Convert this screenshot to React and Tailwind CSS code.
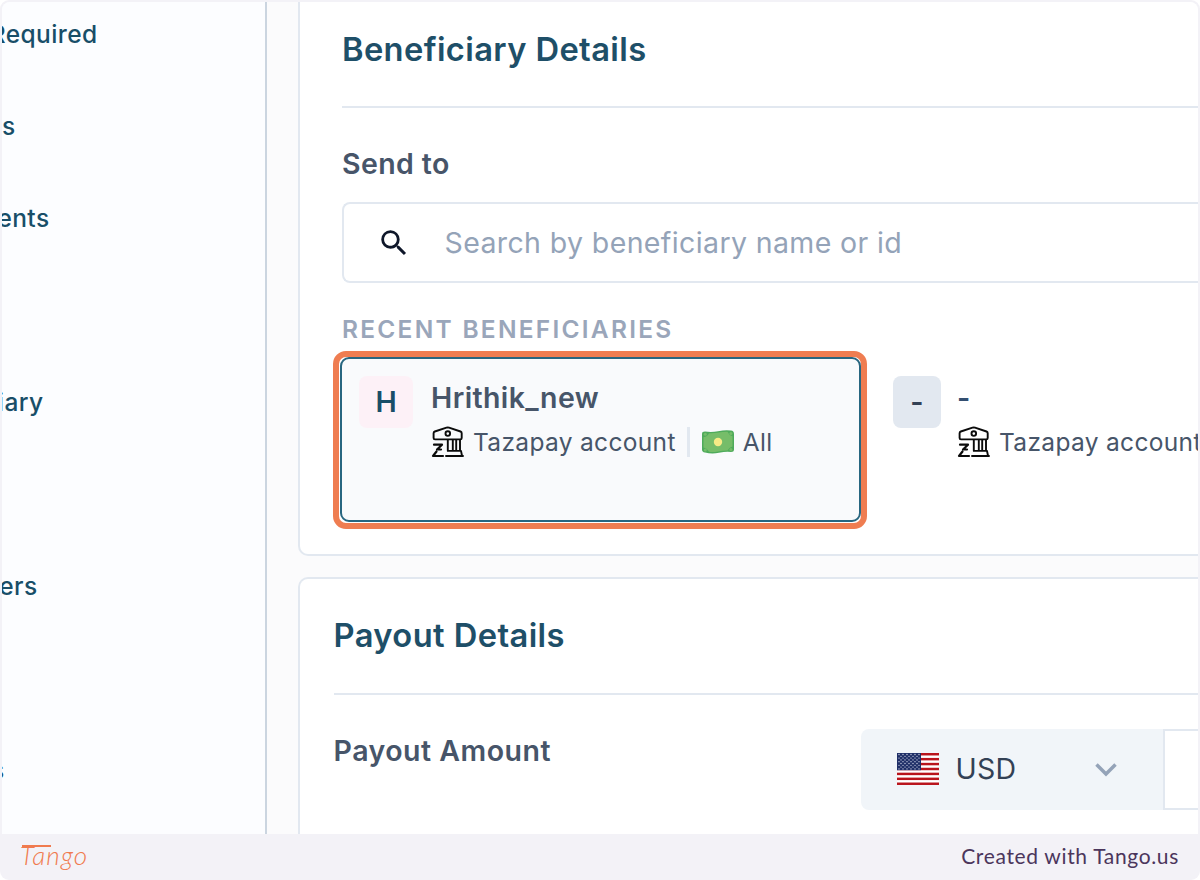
import React from "react";
import { MdSearch } from "react-icons/md";

const navItems = [
  { label: "Required", width: "w-[95.5px]" },
  { label: "s", width: "w-[13.5px]" },
  { label: "ents", width: "w-[47.5px]" },
  { label: "", width: "w-0" },
  { label: "iary", width: "w-[41.5px]" },
  { label: "", width: "w-0" },
  { label: "ers", width: "w-[35.5px]" },
  { label: "", width: "w-0" },
  { label: "s", width: "w-[2.5px]" },
];

function BankIcon() {
  return (
    <svg className="h-8 w-[34px] shrink-0" viewBox="0 0 34 32" fill="none" stroke="#0b0b0b" strokeWidth="1.9" strokeLinejoin="round" strokeLinecap="round">
      <path d="M2.6 7.2 Q2.6 6 3.8 5.5 L15.5 1.7 Q16.8 1.3 18 1.7 L29.5 5.5 Q30.7 6 30.7 7.2 V12 Q30.7 13.4 29.3 13.4 H4 Q2.6 13.4 2.6 12 Z" />
      <circle cx="16.8" cy="7.6" r="2.3" />
      <path d="M16.8 14 V24.6 M21.8 14 V24.6 M25.2 14 V24.6 M29 14 V24.6 M16.8 24.9 H30 L31 29.8 M15 30 H32" />
      <path d="M3 18.7 H11 L6 23.5 H10 M5.5 25.5 L2 30 H12" strokeWidth="2.2" />
    </svg>
  );
}

function CashIcon() {
  return (
    <svg className="h-[26px] w-[34px] shrink-0" viewBox="0 0 34 26">
      <path d="M1 5 Q1 2.6 4 2.6 Q11 3.6 17 2.2 Q25 .6 30 1.6 Q33 2 33 5 V20.5 Q33 23 30 23 Q25 22.3 18 23.8 Q11 25.2 4 23.6 Q1 23 1 20.5 Z" fill="#4fab5b" />
      <path d="M8 4.2 Q12 4.6 17.5 3.5 Q22.500 2.6 26.500 2.8 Q28 6.300 31.5 7.300 V17.500 Q28 18.5 26.500 21.5 Q22 21.400 17 22.5 Q12 23.4 8 22.8 Q6.500 19.500 2.500 18.500 V8.300 Q6.500 7.5 8 4.2 Z" fill="#76bd69" />
      <circle cx="17" cy="13" r="4.2" fill="#f7eb86" />
      <g fill="#76bd69"><circle cx="4.300" cy="5.300" r="1.5" /><circle cx="29.900" cy="4.5" r="1.5" /><circle cx="4.300" cy="21" r="1.5" /><circle cx="29.900" cy="20.5" r="1.5" /></g>
    </svg>
  );
}

function UsFlag() {
  return (
    <svg className="h-8 w-[42px] shrink-0" viewBox="0 0 42 32">
      <rect width="42" height="32" fill="#fff" />
      {[0, 1, 2, 3, 4, 5, 6].map((i) => (
        <rect key={i} y={i * 4.92} width="42" height="2.46" fill="#b9141c" />
      ))}
      <rect width="24" height="17.2" fill="#1f2f68" />
      {[0, 1, 2, 3, 4, 5, 6, 7, 8].map((r) =>
        [0, 1, 2, 3, 4, 5].map((c) =>
          r % 2 && c === 5 ? null : (
            <circle key={`${r}-${c}`} cx={2 + c * 4 + (r % 2) * 2} cy={1.5 + r * 1.8} r="0.65" fill="#d5d9e8" />
          )
        )
      )}
    </svg>
  );
}

function Account({ children }) {
  return (
    <div className="flex h-8 items-center">
      <BankIcon />
      <span className="ml-2 whitespace-nowrap text-[24.5px] leading-8 tracking-[0.33px] text-[#475569]">Tazapay account</span>
      {children}
    </div>
  );
}

export default function App() {
  return (
    <div className="h-[880px] w-[1200px] overflow-hidden bg-white font-['Inter',sans-serif]">
      <div className="flex h-full flex-col overflow-hidden rounded-[9px] bg-[#f3f2f7] px-0.5 pt-0.5">
        <div className="flex h-[832px] overflow-hidden rounded-t-lg bg-[#fbfbfc]">
          <aside className="w-[265px] shrink-0 border-r-2 border-[#cbd5e0] bg-[#fcfdff]">
            <div className="-mt-3.5 flex flex-col">
              {navItems.map((item, i) => (
                <div key={i} className="flex h-[92px] items-center">
                  <div className={`flex justify-end overflow-hidden text-[24.5px] font-medium leading-9 tracking-[0.4px] text-[#184e68] ${item.width}`}>
                    {item.label}
                  </div>
                </div>
              ))}
            </div>
          </aside>

          <main className="flex min-w-0 flex-1 flex-col gap-[21px] pl-[31px]">
            <section className="-mt-3 h-[566px] shrink-0 rounded-l-[10px] border-2 border-r-0 border-[#e2e8f0] bg-white pl-[42px]">
              <h2 className="mt-8 text-[32.7px] font-semibold leading-[50px] tracking-[0.37px] text-[#1e4f68]">Beneficiary Details</h2>
              <div className="mt-8 h-0.5 bg-[#e2e8f0]" />
              <div className="mt-9 text-[28.5px] font-semibold leading-10 tracking-[0.4px] text-[#475569]">Send to</div>
              <div className="mt-[18px] flex h-[81px] items-center rounded-l-lg border-2 border-r-0 border-[#e2e8f0] pl-[33px]">
                <MdSearch className="size-[34px] text-[#0f172a]" />
                <span className="ml-[33.5px] text-[28.5px] leading-10 tracking-[0.38px] text-[#94a3b8]">Search by beneficiary name or id</span>
              </div>
              <div className="mt-[30px] text-[24.5px] font-semibold leading-8 tracking-[2.25px] text-[#9aa6ba]">RECENT BENEFICIARIES</div>
              <div className="-ml-[9px] mt-[6px] flex">
                <div className="h-[178px] w-[534px] shrink-0 rounded-[13px] border-[6px] border-[#ef7d51] bg-white pl-px pb-px">
                  <div className="flex h-[165px] rounded-[9px] border-2 border-[#286680] bg-[#f9fafc] pl-[17px] pt-[17px]">
                    <div className="flex h-[52px] w-[54px] items-center justify-center rounded-lg bg-[#fdf1f7] text-[28.5px] font-semibold text-[#184e68]">H</div>
                    <div className="ml-[18px] mt-0.5">
                      <div className="text-[28.5px] font-semibold leading-10 tracking-[0.4px] text-[#475569]">Hrithik_new</div>
                      <div className="mt-2">
                        <Account>
                          <div className="ml-[11px] h-[30px] w-[3px] bg-[#e2e8f0]" />
                          <div className="ml-[11px]"><CashIcon /></div>
                          <span className="ml-2 text-[24.5px] leading-8 tracking-[0.4px] text-[#475569]">All</span>
                        </Account>
                      </div>
                    </div>
                  </div>
                </div>
                <div className="ml-[26px] mt-[25px] flex">
                  <div className="flex h-[52px] w-[48px] items-center justify-center rounded-lg bg-[#e2e8f0] text-[28.5px] font-semibold text-[#334155]">-</div>
                  <div className="ml-4 mt-0.5">
                    <div className="text-[28.5px] font-semibold leading-10 text-[#334e70]">-</div>
                    <div className="mt-2"><Account /></div>
                  </div>
                </div>
              </div>
            </section>

            <section className="h-[300px] shrink-0 rounded-tl-[10px] border-l-2 border-t-2 border-[#e2e8f0] bg-white pl-[33.5px]">
              <h2 className="mt-[31px] text-[32.7px] font-semibold leading-[50px] tracking-[0.4px] text-[#1e4f68]">Payout Details</h2>
              <div className="mt-[33px] h-0.5 bg-[#e2e8f0]" />
              <div className="mt-[34px] flex">
                <div className="mt-[2px] w-[527.5px] shrink-0 text-[28.5px] font-semibold leading-10 tracking-[0.5px] text-[#475569]">Payout Amount</div>
                <div className="flex h-[81px] w-[302px] shrink-0 items-center rounded-l-lg bg-[#f1f5f9] pb-px pl-[35.5px]">
                  <UsFlag />
                  <span className="ml-[17px] w-[139px] text-[28.5px] leading-10 tracking-[0.3px] text-[#334155]">USD</span>
                  <svg className="mt-px h-3.5 w-[22px]" viewBox="0 0 22 14" fill="none" stroke="#94a3b8" strokeWidth="3.5">
                    <path d="M1.5 1.5 L11 11 L20.5 1.5" />
                  </svg>
                </div>
                <div className="h-[81px] flex-1 border-2 border-r-0 border-[#e2e8f0] bg-white" />
              </div>
            </section>
          </main>
        </div>

        <footer className="flex h-[46px] shrink-0 items-center justify-between pl-[18px] pr-[19px]">
          <div className="relative mb-1 h-9 w-[72px]">
            <span className="font-['Lato',sans-serif] text-[26px] font-light italic leading-9 tracking-[1.2px] text-[#f07b4f]">Tango</span>
            <div className="absolute left-0.5 top-[8px] h-[1.5px] w-[29px] bg-[#f07b4f]" />
          </div>
          <span className="mb-0.5 font-['Lato',sans-serif] text-[21px] leading-8 tracking-[0.66px] text-[#4b365c]">Created with Tango.us</span>
        </footer>
      </div>
    </div>
  );
}
